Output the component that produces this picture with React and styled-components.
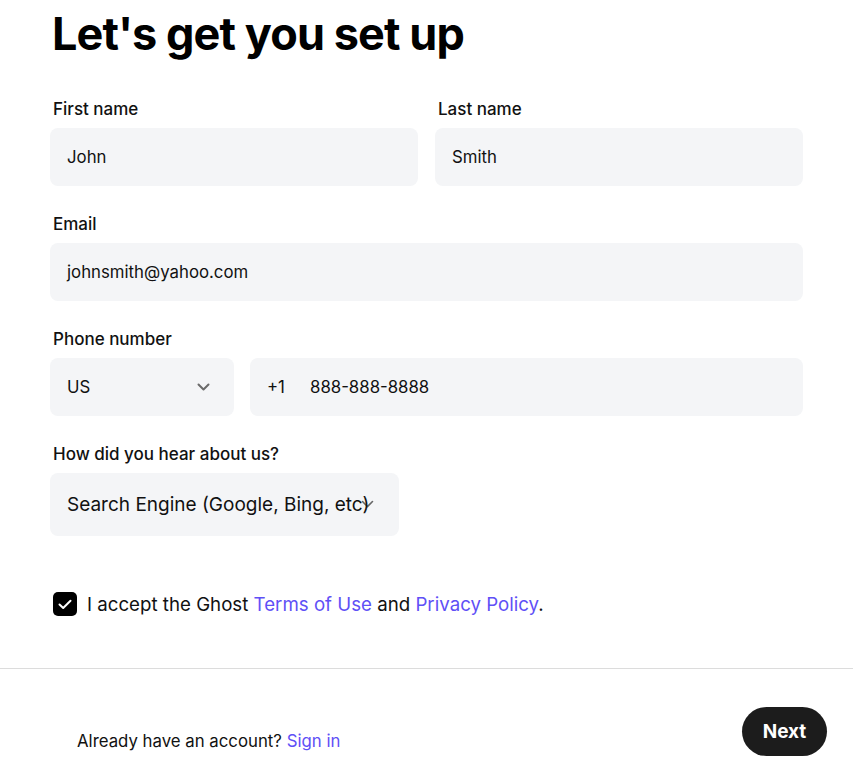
import React from "react";
import styled, { createGlobalStyle } from "styled-components";

const GlobalStyle = createGlobalStyle`
  body {
    margin: 0;
    background: #fff;
    font-family: Inter, "Noto Sans", sans-serif;
    color: #111;
  }
`;

const Page = styled.div`
  width: 853px;
  height: 766px;
  overflow: hidden;
  display: flex;
  flex-direction: column;
`;

const Form = styled.div`
  padding: 7px 50px 0 50px;
  display: flex;
  flex-direction: column;
`;

const Title = styled.h1`
  margin: 0 0 37px 2px;
  font-size: 45px;
  line-height: 53px;
  font-weight: 700;
  letter-spacing: -0.9px;
  color: #000;
`;

const Row = styled.div`
  display: grid;
  grid-template-columns: ${(p) => p.$cols || "1fr"};
  gap: 17px;
  margin-bottom: 26px;
`;

const Field = styled.div`
  display: flex;
  flex-direction: column;
  gap: 7px;
`;

const Label = styled.label`
  font-size: 17px;
  line-height: 24px;
  font-weight: 500;
  padding-left: 3px;
  color: #111;
`;

const Input = styled.div`
  height: ${(p) => p.$h || 58}px;
  width: ${(p) => (p.$w ? `${p.$w}px` : "auto")};
  background: #f4f5f7;
  border-radius: 8px;
  display: flex;
  align-items: center;
  padding: 0 17px;
  font-size: ${(p) => p.$fs || 16.8}px;
  color: #111;
  position: relative;
  box-sizing: border-box;
`;

const Split = styled.div`
  display: grid;
  grid-template-columns: 184px 1fr;
  gap: 16px;
`;

const SelectBox = styled(Input)`
  justify-content: space-between;
  padding-right: 24px;
`;

const Prefix = styled.span`
  width: 43px;
`;

const Chevron = styled.svg`
  flex: none;
`;

const OverChevron = styled.svg`
  position: absolute;
  right: 25px;
  top: 27px;
`;

const SelectText = styled.span`
  position: relative;
`;

const Consent = styled.div`
  display: flex;
  align-items: center;
  gap: 10px;
  margin: 56px 0 0 3px;
  font-size: 18.7px;
  color: #111;
`;

const Check = styled.span`
  width: 24px;
  height: 24px;
  border-radius: 5px;
  background: #000;
  display: flex;
  align-items: center;
  justify-content: center;
`;

const Link = styled.a`
  color: #5f50f6;
  text-decoration: none;
`;

const Divider = styled.hr`
  margin: 52px 0 0 0;
  border: none;
  border-top: 1px solid #dcdcdc;
`;

const Footer = styled.div`
  display: flex;
  justify-content: space-between;
  align-items: flex-start;
  padding: 38px 26px 0 77px;
`;

const FooterText = styled.div`
  margin-top: 22px;
  font-size: 16.8px;
  line-height: 24px;
`;

const NextButton = styled.button`
  width: 85px;
  height: 49px;
  border: none;
  border-radius: 25px;
  background: #1c1c1c;
  color: #fff;
  font-family: Inter, sans-serif;
  font-size: 19px;
  font-weight: 700;
`;

function Down({ color = "#6b6b6b" }) {
  return (
    <Chevron width="13" height="8" viewBox="0 0 13 8" fill="none">
      <path d="M1.5 1.5 L6.5 6.5 L11.5 1.5" stroke={color} strokeWidth="2" strokeLinecap="round" strokeLinejoin="round" />
    </Chevron>
  );
}

export default function App() {
  return (
    <Page>
      <GlobalStyle />
      <Form>
        <Title>Let's get you set up</Title>
        <Row $cols="1fr 1fr">
          <Field>
            <Label>First name</Label>
            <Input>John</Input>
          </Field>
          <Field>
            <Label>Last name</Label>
            <Input>Smith</Input>
          </Field>
        </Row>
        <Row>
          <Field>
            <Label>Email</Label>
            <Input>johnsmith@yahoo.com</Input>
          </Field>
        </Row>
        <Row>
          <Field>
            <Label>Phone number</Label>
            <Split>
              <SelectBox>
                US
                <Down />
              </SelectBox>
              <Input>
                <Prefix>+1</Prefix>
                888-888-8888
              </Input>
            </Split>
          </Field>
        </Row>
        <Field>
          <Label>How did you hear about us?</Label>
          <Input $h={63} $fs={19} $w={349}>
            <OverChevron width="13" height="8" viewBox="0 0 13 8" fill="none">
              <path d="M1.5 1.5 L6.5 6.5 L11.5 1.5" stroke="#666" strokeWidth="1.6" strokeLinecap="round" />
            </OverChevron>
            <SelectText>Search Engine (Google, Bing, etc)</SelectText>
          </Input>
        </Field>
        <Consent>
          <Check>
            <svg width="14" height="11" viewBox="0 0 14 11" fill="none">
              <path d="M1.5 5.5 L5.2 9 L12.5 1.8" stroke="#fff" strokeWidth="2" strokeLinecap="round" strokeLinejoin="round" />
            </svg>
          </Check>
          <span>
            I accept the Ghost <Link>Terms of Use</Link> and <Link>Privacy Policy</Link>.
          </span>
        </Consent>
      </Form>
      <Divider />
      <Footer>
        <FooterText>
          Already have an account? <Link>Sign in</Link>
        </FooterText>
        <NextButton>Next</NextButton>
      </Footer>
    </Page>
  );
}
